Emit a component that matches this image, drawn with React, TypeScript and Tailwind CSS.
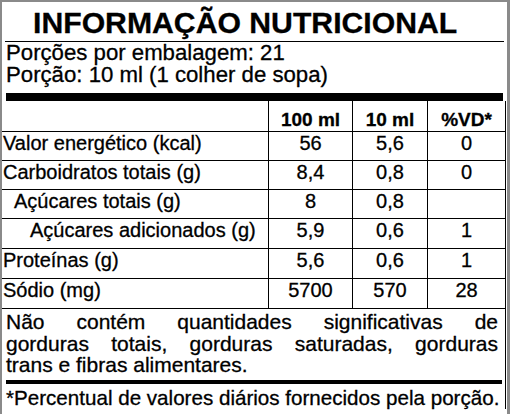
const rows = [
  { label: 'Valor energético (kcal)', a: '56', b: '5,6', vd: '0', pad: 'pl-[1px]', h: 'h-[29px]' },
  { label: 'Carboidratos totais (g)', a: '8,4', b: '0,8', vd: '0', pad: 'pl-[1px]', h: 'h-[29px]' },
  { label: 'Açúcares totais (g)', a: '8', b: '0,8', vd: '', pad: 'pl-[12px]', h: 'h-[29px]' },
  { label: 'Açúcares adicionados (g)', a: '5,9', b: '0,6', vd: '1', pad: 'pl-[28px]', h: 'h-[30px]' },
  { label: 'Proteínas (g)', a: '5,6', b: '0,6', vd: '1', pad: 'pl-[1px]', h: 'h-[30px]' },
  { label: 'Sódio (mg)', a: '5700', b: '570', vd: '28', pad: 'pl-[1px]', h: 'h-[30px]' },
]

export default function App() {
  return (
    <div className="h-[414px] w-[510px] overflow-hidden border-t-2 border-r-[3px] border-l-2 border-[#8a8a8a] bg-white font-['Liberation_Sans',Arial,sans-serif] text-black [-webkit-text-stroke:0.3px_black]">
      {/* título */}
      <div className="mr-[3px] ml-[3px] h-[40px] border-b border-black pt-[6px] pl-[28px]">
        <h1 className="text-[30.2px] leading-[30px] font-bold">INFORMAÇÃO NUTRICIONAL</h1>
      </div>

      <div className="pl-[4px] text-[22.2px] leading-[22px]">
        <p>Porções por embalagem: 21</p>
        <p>Porção: 10 ml (1 colher de sopa)</p>
      </div>

      <div className="mt-[7px] mr-[4px] ml-[4px] h-[8px] bg-black" />

      {/* tabela */}
      <div className="grid grid-cols-[266px_84px_75px_79px]">
        <div className="h-[31px] border-b border-black" />
        <div className="h-[31px] border-b border-l border-black pt-[9px] text-center text-[19px] leading-[19px] font-bold">
          100 ml
        </div>
        <div className="h-[31px] border-b border-l border-black pt-[9px] text-center text-[19px] leading-[19px] font-bold">
          10 ml
        </div>
        <div className="h-[31px] border-r border-b border-l border-black pt-[9px] text-center text-[19px] leading-[19px] font-bold">
          %VD*
        </div>

        {rows.map((r) => (
          <div key={r.label} className="contents text-[20px] leading-[23px]">
            <div className={`${r.h} ${r.pad} border-b border-black`}>{r.label}</div>
            <div className={`${r.h} border-b border-l border-black text-center`}>{r.a}</div>
            <div className={`${r.h} border-b border-l border-black text-center`}>{r.b}</div>
            <div className={`${r.h} border-r border-b border-l border-black text-center`}>{r.vd}</div>
          </div>
        ))}
      </div>

      <div className="mr-[1px] border-r border-black">
        <div className="pt-[2px] pr-[7px] pl-[4px] text-[21px] leading-[21.5px]">
          <p className="text-justify [text-align-last:justify]">Não contém quantidades significativas de</p>
          <p className="text-justify [text-align-last:justify]">gorduras totais, gorduras saturadas, gorduras</p>
          <p>trans e fibras alimentares.</p>
        </div>
        <div className="mt-[4px] mr-[3px] ml-[4px] h-[4px] bg-black" />
        <p className="pt-[3px] pl-[4px] text-[20.6px] leading-[22px] whitespace-nowrap">
          *Percentual de valores diários fornecidos pela porção.
        </p>
      </div>
    </div>
  )
}
